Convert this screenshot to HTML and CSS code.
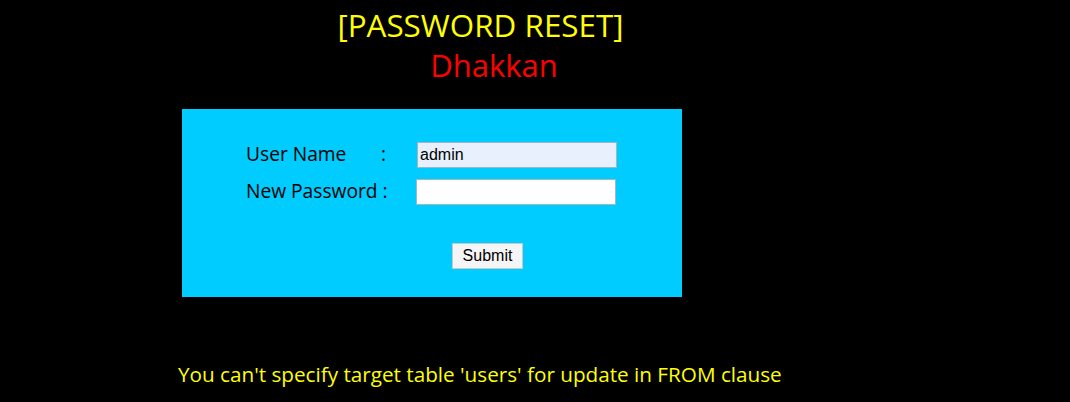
FILE: index.html
```html
<!DOCTYPE html>
<html>
<head>
<meta charset="utf-8">
<title>Less-17 Update Query- Error based - String</title>
<link rel="stylesheet" href="styles.css">
</head>
<body>
<div class="header">
  <div class="title">[PASSWORD RESET]</div>
  <div class="author">Dhakkan</div>
</div>
<div class="box">
  <form class="form" action="" method="post">
    <div class="row">
      <label class="label"><span class="label-name">User Name</span><span>:</span></label>
      <input class="field field-filled" type="text" name="uname" value="admin">
    </div>
    <div class="row">
      <label class="label">New Password :</label>
      <input class="field field-empty" type="text" name="passwd" value="">
    </div>
    <div class="actions">
      <input class="submit" type="submit" name="submit" value="Submit">
    </div>
  </form>
</div>
<div class="message">You can't specify target table 'users' for update in FROM clause</div>
</body>
</html>
```

FILE: styles.css
```css
html, body {
  margin: 0;
  padding: 0;
  background: #000000;
}
body {
  font-family: "Open Sans", "Noto Sans", sans-serif;
  width: 1070px;
  height: 402px;
  overflow: hidden;
}
.header {
  width: 961px;
  text-align: center;
  padding-top: 5px;
}
.title {
  color: #FFFF00;
  font-size: 31.4px;
  line-height: 40px;
}
.author {
  color: #FF0000;
  font-size: 31px;
  line-height: 40px;
  padding-left: 27px;
}
.box {
  margin-left: 182px;
  margin-top: 24px;
  width: 500px;
  height: 188px;
  background: #00CCFF;
  box-sizing: border-box;
  padding-top: 27px;
  padding-left: 64px;
}
.form {
  margin: 0;
}
.row {
  display: flex;
  align-items: center;
  height: 37px;
}
.label {
  width: 170px;
  font-size: 19.2px;
  color: #000;
  display: flex;
  position: relative;
  top: -1px;
}
.label-name {
  width: 135px;
}
.field {
  width: 200px;
  height: 26px;
  box-sizing: border-box;
  border: 1px solid #9fb6c8;
  font-family: "Liberation Sans", Arial, sans-serif;
  font-size: 16px;
  padding: 0 2px;
  margin: 0;
  outline: none;
}
.field-filled {
  background: #E8F0FE;
  margin-left: 1px;
}
.field-empty {
  background: #FFFFFF;
}
.actions {
  padding-top: 33px;
  padding-left: 206px;
}
.submit {
  width: 71px;
  height: 26px;
  box-sizing: border-box;
  background: #F5F5F5;
  border: 1px solid #c8c8c8;
  font-family: "Liberation Sans", Arial, sans-serif;
  font-size: 16px;
  color: #000;
  padding: 0;
  margin: 0;
}
.message {
  color: #FFFF00;
  font-size: 20.7px;
  margin-top: 63px;
  padding-left: 178px;
  line-height: 28px;
}
```
